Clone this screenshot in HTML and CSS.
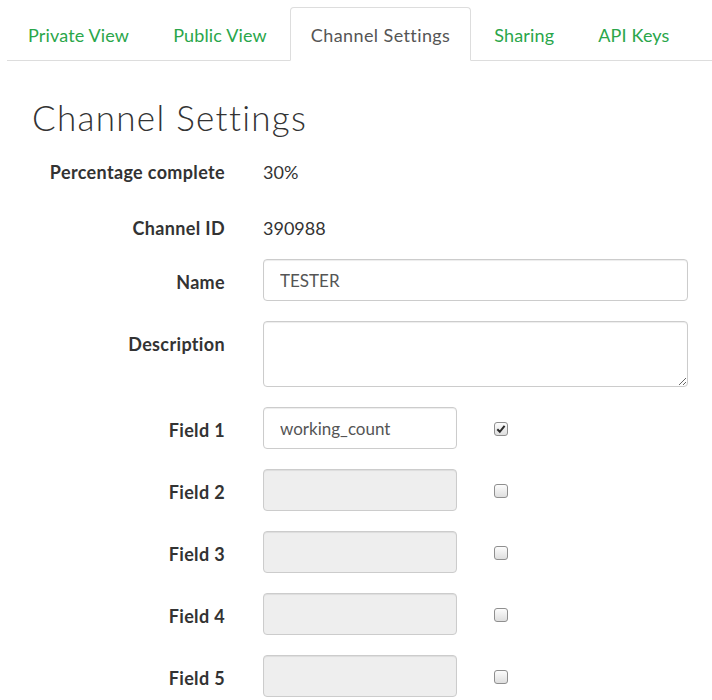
FILE: index.html
```html
<!DOCTYPE html>
<html>
<head>
<meta charset="utf-8">
<link rel="stylesheet" href="styles.css">
</head>
<body>
<div class="page">
  <ul class="tabs">
    <li class="tab"><a>Private View</a></li>
    <li class="tab"><a>Public View</a></li>
    <li class="tab active"><a>Channel Settings</a></li>
    <li class="tab"><a>Sharing</a></li>
    <li class="tab"><a>API Keys</a></li>
  </ul>
  <div class="panel">
    <h1 class="title">Channel Settings</h1>
    <div class="form">
      <div class="row static">
        <div class="label">Percentage complete</div>
        <div class="value">30%</div>
      </div>
      <div class="row static">
        <div class="label">Channel ID</div>
        <div class="value">390988</div>
      </div>
      <div class="row">
        <div class="label">Name</div>
        <input class="input wide" type="text" value="TESTER">
      </div>
      <div class="row">
        <div class="label">Description</div>
        <textarea class="input wide area"></textarea>
      </div>
      <div class="row">
        <div class="label">Field 1</div>
        <input class="input field" type="text" value="working_count">
        <span class="check on"><svg viewBox="0 0 14 14" width="14" height="14"><path d="M3.3 7.3 L5.8 9.8 L10.6 3.9" fill="none" stroke="#2b2b2b" stroke-width="2"/></svg></span>
      </div>
      <div class="row">
        <div class="label">Field 2</div>
        <input class="input field" type="text" disabled>
        <span class="check"></span>
      </div>
      <div class="row">
        <div class="label">Field 3</div>
        <input class="input field" type="text" disabled>
        <span class="check"></span>
      </div>
      <div class="row">
        <div class="label">Field 4</div>
        <input class="input field" type="text" disabled>
        <span class="check"></span>
      </div>
      <div class="row">
        <div class="label">Field 5</div>
        <input class="input field" type="text" disabled>
        <span class="check"></span>
      </div>
    </div>
  </div>
</div>
</body>
</html>
```
FILE: styles.css
```css
html, body {
  margin: 0;
  padding: 0;
  background: #fff;
}
body {
  font-family: "Lato", "Liberation Sans", sans-serif;
  color: #333;
  font-size: 18px;
}
.page {
  padding: 7px 0 0 7px;
}
.tabs {
  list-style: none;
  margin: 0;
  padding: 0;
  display: flex;
  border-bottom: 1px solid #ddd;
}
.tab {
  margin-right: 2px;
  margin-bottom: -1px;
}
.tab a {
  display: block;
  padding: 16px 20px 14px;
  line-height: 22px;
  font-size: 18px;
  letter-spacing: 0.15px;
  color: #2aa64a;
  border: 1px solid transparent;
  border-radius: 4px 4px 0 0;
}
.tab.active a {
  color: #555;
  background: #fff;
  letter-spacing: 0.4px;
  border-color: #ddd #ddd transparent #ddd;
}
.panel {
  padding-left: 25px;
}
.title {
  margin: 36px 0 10px;
  font-family: "Lato", sans-serif;
  font-weight: 300;
  font-size: 35px;
  line-height: 40px;
  letter-spacing: 1.3px;
  color: #333;
}
.form {
  display: flex;
  flex-direction: column;
  gap: 20px;
}
.row {
  display: flex;
  align-items: flex-start;
}
.label {
  width: 193px;
  text-align: right;
  font-weight: 700;
  font-size: 18px;
  letter-spacing: 0.35px;
  line-height: 22px;
  padding-top: 12px;
  margin-right: 38px;
  flex: none;
}
.row.static {
  height: 36px;
}
.row.static .label {
  padding-top: 14px;
}
.value {
  padding-top: 14px;
  line-height: 22px;
  font-size: 18px;
}
.input {
  box-sizing: border-box;
  height: 42px;
  border: 1px solid #ccc;
  border-radius: 4px;
  padding: 0 16px;
  font-family: "Lato", sans-serif;
  font-size: 17px;
  color: #555;
  background: #fff;
  box-shadow: inset 0 1px 1px rgba(0,0,0,0.075);
  margin: 0;
}
.input:disabled {
  background: #eee;
}
.wide {
  width: 425px;
}
.area {
  height: 66px;
  resize: vertical;
  padding-top: 8px;
  display: block;
}
.field {
  width: 194px;
}
.check {
  box-sizing: border-box;
  width: 14px;
  height: 14px;
  margin-left: 37px;
  margin-top: 15px;
  border: 1px solid #8f8f8f;
  border-radius: 3px;
  background: linear-gradient(#fcfcfc, #dedede);
  position: relative;
}
.check svg {
  position: absolute;
  left: -1px;
  top: -1px;
}
```
